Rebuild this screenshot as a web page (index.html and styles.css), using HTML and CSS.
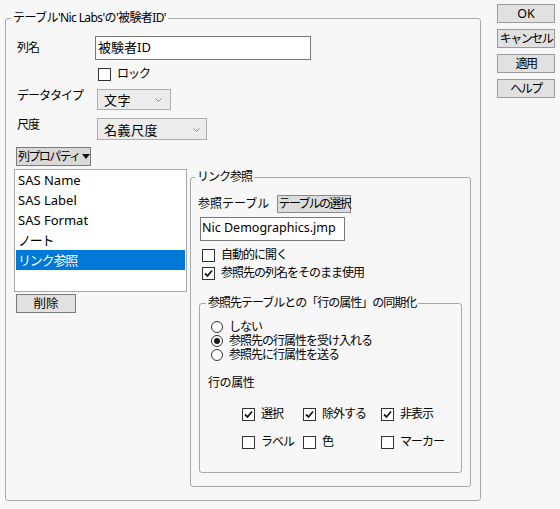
FILE: index.html
```html
<!DOCTYPE html>
<html lang="ja">
<head>
<meta charset="utf-8">
<title>列情報</title>
<link rel="stylesheet" href="styles.css">
</head>
<body>
<div class="window">
  <fieldset class="group main-group">
    <legend>テーブル'Nic Labs'の'被験者ID'</legend>
    <div class="main-body">
      <div class="row row-name">
        <span class="label">列名</span>
        <div class="textbox name-box">被験者ID</div>
      </div>
      <div class="check lock-check"><span class="box"></span><span>ロック</span></div>
      <div class="row row-type">
        <span class="label">データタイプ</span>
        <div class="select type-select"><span>文字</span><svg class="chev" width="7" height="4" viewBox="0 0 7 4"><path d="M0.5 0.5 L3.5 3.5 L6.5 0.5" fill="none" stroke="#8a8a8a" stroke-width="1"/></svg></div>
      </div>
      <div class="row row-scale">
        <span class="label">尺度</span>
        <div class="select scale-select"><span>名義尺度</span><svg class="chev" width="7" height="4" viewBox="0 0 7 4"><path d="M0.5 0.5 L3.5 3.5 L6.5 0.5" fill="none" stroke="#8a8a8a" stroke-width="1"/></svg></div>
      </div>
      <div class="menu-btn"><span>列プロパティ</span><svg class="tri" width="8" height="5" viewBox="0 0 8 5"><path d="M0 0 H8 L4 5 Z" fill="#111"/></svg></div>
      <div class="props">
        <div class="list-col">
          <ul class="list">
            <li class="en">SAS Name</li>
            <li class="en">SAS Label</li>
            <li class="en">SAS Format</li>
            <li>ノート</li>
            <li class="selected">リンク参照</li>
          </ul>
          <div class="btn del-btn">削除</div>
        </div>
        <fieldset class="group link-group">
          <legend>リンク参照</legend>
          <div class="link-body">
            <div class="ref-row">
              <span class="ref-label">参照テーブル</span>
              <div class="btn pick-btn">テーブルの選択</div>
            </div>
            <div class="textbox file-box">Nic Demographics.jmp</div>
            <div class="check link-check first"><span class="box"></span><span>自動的に開く</span></div>
            <div class="check link-check"><span class="box"><svg width="11" height="11" viewBox="0 0 11 11"><path d="M2 5.5 L4.5 8 L9 2.5" fill="none" stroke="#1a1a1a" stroke-width="1.8"/></svg></span><span>参照先の列名をそのまま使用</span></div>
            <fieldset class="group sync-group">
              <legend>参照先テーブルとの「行の属性」の同期化</legend>
              <div class="sync-body">
                <div class="radio"><span class="dot"></span><span>しない</span></div>
                <div class="radio"><span class="dot on"></span><span>参照先の行属性を受け入れる</span></div>
                <div class="radio"><span class="dot"></span><span>参照先に行属性を送る</span></div>
                <div class="attr-title">行の属性</div>
                <div class="attr-grid">
                  <div class="check"><span class="box"><svg width="11" height="11" viewBox="0 0 11 11"><path d="M2 5.5 L4.5 8 L9 2.5" fill="none" stroke="#1a1a1a" stroke-width="1.8"/></svg></span><span>選択</span></div>
                  <div class="check"><span class="box"><svg width="11" height="11" viewBox="0 0 11 11"><path d="M2 5.5 L4.5 8 L9 2.5" fill="none" stroke="#1a1a1a" stroke-width="1.8"/></svg></span><span>除外する</span></div>
                  <div class="check"><span class="box"><svg width="11" height="11" viewBox="0 0 11 11"><path d="M2 5.5 L4.5 8 L9 2.5" fill="none" stroke="#1a1a1a" stroke-width="1.8"/></svg></span><span>非表示</span></div>
                  <div class="check"><span class="box"></span><span>ラベル</span></div>
                  <div class="check"><span class="box"></span><span>色</span></div>
                  <div class="check"><span class="box"></span><span>マーカー</span></div>
                </div>
              </div>
            </fieldset>
          </div>
        </fieldset>
      </div>
    </div>
  </fieldset>
  <div class="buttons">
    <div class="btn side-btn en">OK</div>
    <div class="btn side-btn">キャンセル</div>
    <div class="btn side-btn">適用</div>
    <div class="btn side-btn">ヘルプ</div>
  </div>
</div>
</body>
</html>
```

FILE: styles.css
```css
* {
  box-sizing: border-box;
}

html, body {
  margin: 0;
  padding: 0;
}

body {
  width: 560px;
  height: 509px;
  overflow: hidden;
  background: #f7f7f7;
  color: #000;
  font-family: "Noto Sans", "Noto Sans CJK JP", sans-serif;
  font-size: 12px;
  line-height: 16px;
  letter-spacing: -1px;
}

.en {
  letter-spacing: 0;
}

.window {
  display: flex;
  align-items: flex-start;
  padding: 4px 0 0 5px;
}

.group {
  margin: 0;
  padding: 0;
  min-width: 0;
  border: 1px solid #a8a8a8;
  border-radius: 3px;
}

.group > legend {
  padding: 0 2px;
  height: 16px;
  line-height: 16px;
  white-space: nowrap;
}

.main-group {
  margin-top: 6px;
  width: 476px;
  height: 491px;
}

.main-group > legend {
  margin-left: 5px;
  letter-spacing: -0.6px;
}

.main-body {
  padding: 10px 0 0 11px;
}

.row {
  display: flex;
  align-items: flex-start;
}

.label {
  width: 78px;
  flex: none;
  white-space: nowrap;
}

.row-name {
  align-items: center;
  height: 24px;
}

.textbox {
  background: #fff;
  border: 1px solid #7a7a7a;
  font-size: 13px;
  letter-spacing: 0;
  line-height: 16px;
  white-space: nowrap;
}

.name-box {
  width: 216px;
  height: 24px;
  padding: 2px 2px 0;
}

.check {
  display: flex;
  align-items: center;
  height: 16px;
  gap: 6px;
  white-space: nowrap;
}

.box {
  width: 13px;
  height: 13px;
  flex: none;
  border: 1px solid #333;
  background: #fff;
  display: flex;
  align-items: center;
  justify-content: center;
}

.lock-check {
  margin-top: 6px;
  margin-left: 81px;
}

.row-type {
  margin-top: 7px;
}

.row-type .label,
.row-scale .label {
  line-height: 14px;
}

.select {
  margin-left: 2px;
  display: flex;
  align-items: center;
  justify-content: space-between;
  background: #ececec;
  border: 1px solid #adadad;
  padding: 1px 8px 0 6px;
  font-size: 13px;
  letter-spacing: 0.5px;
  white-space: nowrap;
}

.type-select {
  width: 74px;
  height: 21px;
}

.scale-select {
  width: 110px;
  height: 22px;
  padding-right: 6px;
}

.row-scale {
  margin-top: 8px;
}

.menu-btn {
  margin-top: 7px;
  margin-left: -1px;
  width: 75px;
  height: 19px;
  display: flex;
  align-items: center;
  gap: 2px;
  padding-left: 1px;
  background: #d9d9d9;
  border: 1px solid #7a7a7a;
  letter-spacing: -1.6px;
  white-space: nowrap;
}

.menu-btn .tri {
  flex: none;
}

.props {
  margin-top: 3px;
  display: flex;
  align-items: flex-start;
}

.list-col {
  margin-left: -3px;
  display: flex;
  flex-direction: column;
}

.list {
  margin: 0;
  padding: 0 1px;
  list-style: none;
  width: 173px;
  height: 123px;
  background: #fff;
  border: 1px solid #a8a8a8;
}

.list li {
  height: 20px;
  line-height: 20px;
  padding-left: 2px;
  font-size: 13px;
  letter-spacing: -1.2px;
  white-space: nowrap;
}

.list li.en {
  letter-spacing: 0;
}

.list li.selected {
  background: #0078d7;
  color: #fff;
}

.btn {
  display: flex;
  align-items: center;
  justify-content: center;
  background: #e1e1e1;
  border: 1px solid #7a7a7a;
  white-space: nowrap;
}

.del-btn {
  margin-top: 2px;
  margin-left: 2px;
  width: 60px;
  height: 19px;
  font-size: 12.5px;
  letter-spacing: 0;
}

.link-group {
  margin-left: 3px;
  width: 281px;
  height: 318px;
}

.link-group > legend {
  margin-left: 4px;
}

.link-body {
  padding: 10px 0 0 7px;
}

.ref-row {
  display: flex;
  align-items: center;
  height: 18px;
  gap: 8px;
}

.ref-label {
  letter-spacing: 0;
  white-space: nowrap;
}

.pick-btn {
  width: 74px;
  height: 18px;
  background: #dcdcdc;
  border-color: #8a8a8a;
  letter-spacing: -1.7px;
}

.file-box {
  margin-top: 4px;
  margin-left: 2px;
  width: 145px;
  height: 24px;
  padding: 2px 0 0 1px;
  font-size: 12.5px;
}

.link-check {
  margin-top: 2px;
  margin-left: 4px;
}

.link-check.first {
  margin-top: 6px;
}

.sync-group {
  margin-top: 14px;
  margin-left: 1px;
  width: 263px;
  height: 178px;
}

.sync-group > legend {
  margin-left: 6px;
}

.sync-body {
  padding: 9px 0 0 8px;
}

.radio {
  display: flex;
  align-items: center;
  gap: 6px;
  height: 14px;
  line-height: 14px;
  margin-left: 3px;
  white-space: nowrap;
}

.dot {
  width: 12px;
  height: 12px;
  flex: none;
  border: 1px solid #333;
  border-radius: 50%;
  background: #fff;
  display: flex;
  align-items: center;
  justify-content: center;
}

.dot.on::after {
  content: "";
  width: 6px;
  height: 6px;
  border-radius: 50%;
  background: #1a1a1a;
}

.attr-title {
  margin-top: 13px;
  letter-spacing: -0.4px;
}

.attr-grid {
  margin-top: 15px;
  margin-left: 34px;
  display: grid;
  grid-template-columns: 61px 78px auto;
  row-gap: 12px;
}

.buttons {
  margin-left: 16px;
  display: flex;
  flex-direction: column;
  gap: 6px;
}

.side-btn {
  width: 58px;
  height: 19px;
  border-color: #9a9a9a;
  letter-spacing: -1.5px;
}

.side-btn.en {
  letter-spacing: 0;
  font-size: 12.5px;
}
```
